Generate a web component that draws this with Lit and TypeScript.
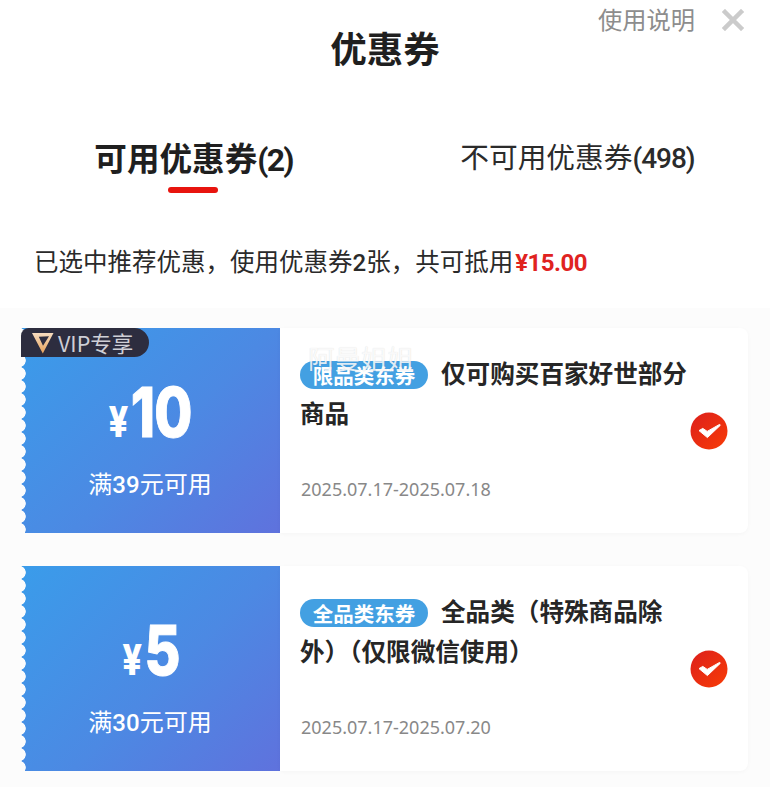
import { LitElement, html, css, svg } from "lit";
import { customElement } from "lit/decorators.js";

const coupons = [
  { amount: "10", pre: "满", num: "39", post: "元可用", tag: "限品类东券", title: "仅可购买百家好世部分商品", date: "2025.07.17-2025.07.18", vip: true },
  { amount: "5", pre: "满", num: "30", post: "元可用", tag: "全品类东券", title: "全品类（特殊商品除外）（仅限微信使用）", date: "2025.07.17-2025.07.20", vip: false },
];

const check = svg`<svg class="check" viewBox="0 0 38 38" width="38" height="38">
  <defs><linearGradient id="cg" x1="0" y1="0" x2="1" y2="1"><stop offset="0" stop-color="#dc1f1c"/><stop offset="1" stop-color="#f83c06"/></linearGradient></defs>
  <circle cx="19" cy="19" r="18.5" fill="url(#cg)"/>
  <path d="M9 18.6 L12.8 16.4 L17.2 19.4 L29.6 12.4 L30.4 13.2 L17.4 25.6 Z" fill="#fff" stroke="#fff" stroke-width="1" stroke-linejoin="round"/>
</svg>`;

const vipMark = svg`<svg viewBox="0 0 22 22" width="22" height="22">
  <defs><linearGradient id="vg" x1="0" y1="0" x2="0" y2="1"><stop offset="0" stop-color="#f6dcc0"/><stop offset="1" stop-color="#e8a25a"/></linearGradient></defs>
  <path fill-rule="evenodd" d="M0 1 H21.5 L10.8 21.5 Z M6.8 4.8 L11 13.8 L17 4.2 Z" fill="url(#vg)"/>
</svg>`;

@customElement("app-root")
export class AppRoot extends LitElement {
  static styles = css`
    :host {
      display: block;
      width: 770px;
      height: 787px;
      overflow: hidden;
      background: #fff;
      font-family: "Noto Sans CJK SC", "Noto Sans", sans-serif;
      color: #222;
    }
    .d {
      font-family: Roboto, sans-serif;
    }
    .head {
      height: 101px;
      display: flex;
      justify-content: center;
      padding-top: 22px;
      box-sizing: border-box;
      position: relative;
    }
    .head h1 {
      margin: 0;
      font-size: 36.5px;
      line-height: 52px;
      font-weight: 700;
      color: #1f1f1f;
    }
    .help {
      position: absolute;
      left: 598px;
      top: 1px;
      font-size: 24.25px;
      line-height: 35px;
      color: #8d8d8d;
    }
    .close {
      position: absolute;
      left: 722px;
      top: 9px;
    }
    .tabs {
      display: grid;
      grid-template-columns: 387px 383px;
      height: 100px;
    }
    .tab {
      display: flex;
      flex-direction: column;
      align-items: center;
      padding-top: 33px;
      box-sizing: border-box;
    }
    .tab > span {
      white-space: nowrap;
    }
    .tab.on {
      font-weight: 700;
      color: #1f1f1f;
    }
    .tab.on > span {
      font-size: 32.6px;
      line-height: 46px;
    }
    .tab.on .d {
      font-size: 32px;
      font-weight: 700;
      letter-spacing: -1.8px;
    }
    .tab.off {
      color: #2b2b2b;
    }
    .tab.off > span {
      font-size: 28.7px;
      line-height: 44px;
      margin-left: -2px;
    }
    .tab.off .d {
      font-size: 28px;
      font-weight: 500;
      letter-spacing: -1px;
    }
    .bar {
      width: 50px;
      height: 6px;
      border-radius: 3px;
      background: #e8140e;
      margin-top: 4px;
      margin-left: -2px;
    }
    .summary {
      height: 107px;
      box-sizing: border-box;
      padding: 42px 0 0 34px;
      font-size: 24.5px;
      line-height: 36px;
      color: #2a2a2a;
      white-space: nowrap;
    }
    .summary .d {
      font-weight: 500;
      font-size: 24px;
    }
    .summary b {
      color: #e0231f;
      font-family: Roboto, sans-serif;
      font-weight: 700;
      font-size: 24px;
      letter-spacing: -0.5px;
      margin-left: 2px;
    }
    .list {
      background: #fcfcfc;
      padding: 20px 22px 0 21px;
      display: flex;
      flex-direction: column;
      gap: 33px;
      height: 479px;
      box-sizing: border-box;
    }
    .coupon {
      display: grid;
      grid-template-columns: 259px 468px;
      height: 205px;
      position: relative;
    }
    .left {
      position: relative;
      background: linear-gradient(135deg, #3a9cea 0%, #4c89e3 55%, #5f72dd 100%);
      color: #fff;
      display: flex;
      flex-direction: column;
      align-items: center;
      box-sizing: border-box;
      padding-top: 46px;
    }
    .left::before {
      content: "";
      position: absolute;
      left: 0;
      top: 0;
      bottom: 0;
      width: 5px;
      background-image: radial-gradient(circle at -2px 6.5px, #fcfcfc 6.4px, transparent 7px);
      background-size: 5px 13px;
      background-repeat: repeat-y;
    }
    .price {
      display: flex;
      align-items: baseline;
      justify-content: center;
      font-family: Inter, sans-serif;
      font-weight: 800;
      line-height: 76px;
      height: 76px;
      transform: scaleX(0.8);
    }
    .price i {
      font-style: normal;
      font-size: 43px;
      margin-right: 3px;
    }
    .price em {
      font-style: normal;
      font-size: 69px;
      letter-spacing: -1px;
      -webkit-text-stroke: 1px #fff;
    }
    .min {
      margin-top: 16px;
      margin-left: -1px;
      font-size: 24px;
      line-height: 34px;
      white-space: nowrap;
    }
    .min .d {
      font-weight: 500;
    }
    .vip {
      position: absolute;
      left: 0;
      top: 0;
      height: 29px;
      width: 128px;
      box-sizing: border-box;
      padding-left: 11px;
      border-radius: 8px 15px 15px 0;
      background: #2d2d3f;
      color: #cfcfd6;
      display: flex;
      align-items: center;
      gap: 4px;
      font-size: 21.5px;
      white-space: nowrap;
    }
    .right {
      background: #fff;
      border-radius: 0 8px 8px 0;
      box-shadow: 0 1px 4px rgba(0, 0, 0, 0.03);
      position: relative;
      box-sizing: border-box;
      padding: 24px 0 0 20px;
    }
    .title {
      margin: 0;
      width: 392px;
      font-size: 24.6px;
      line-height: 40px;
      font-weight: 700;
      color: #262626;
    }
    .tag {
      display: inline-block;
      vertical-align: -1px;
      width: 128px;
      height: 28px;
      margin-right: 13px;
      text-align: center;
      border-radius: 14px;
      background: #43a0e2;
      color: #fff;
      font-size: 20.5px;
      line-height: 28px;
      font-weight: 700;
    }
    .date {
      position: absolute;
      left: 21px;
      top: 147px;
      font-size: 18px;
      line-height: 28px;
      color: #888;
      font-family: "Noto Sans", sans-serif;
      white-space: nowrap;
    }
    .check {
      position: absolute;
      left: 410px;
      top: 84px;
    }
    .mark {
      position: absolute;
      left: 28px;
      top: 13px;
      font-size: 26.5px;
      line-height: 34px;
      color: rgba(255, 255, 255, 0.85);
      text-shadow: 0 0 1px rgba(0, 0, 0, 0.15);
      white-space: nowrap;
      pointer-events: none;
    }
  `;

  render() {
    return html`
      <div class="head">
        <h1>优惠券</h1>
        <span class="help">使用说明</span>
        <svg class="close" width="22" height="22" viewBox="0 0 22 22">
          <path d="M3 3 L19 19 M19 3 L3 19" stroke="#cbcbcb" stroke-width="4.5" stroke-linecap="square" fill="none"/>
        </svg>
      </div>
      <div class="tabs">
        <div class="tab on"><span>可用优惠券<span class="d">(2)</span></span><div class="bar"></div></div>
        <div class="tab off"><span>不可用优惠券<span class="d">(498)</span></span></div>
      </div>
      <div class="summary">已选中推荐优惠，使用优惠券<span class="d">2</span>张，共可抵用<b>¥15.00</b></div>
      <div class="list">
        ${coupons.map(
          (c) => html`
            <div class="coupon">
              <div class="left">
                <div class="price"><i>¥</i><em>${c.amount}</em></div>
                <div class="min">${c.pre}<span class="d">${c.num}</span>${c.post}</div>
                ${c.vip ? html`<div class="vip">${vipMark}<span>VIP专享</span></div>` : ""}
              </div>
              <div class="right">
                <p class="title"><span class="tag">${c.tag}</span>${c.title}</p>
                <div class="date">${c.date}</div>
                ${check}
                ${c.vip ? html`<div class="mark">阿曼姐姐</div>` : ""}
              </div>
            </div>
          `
        )}
      </div>
    `;
  }
}
